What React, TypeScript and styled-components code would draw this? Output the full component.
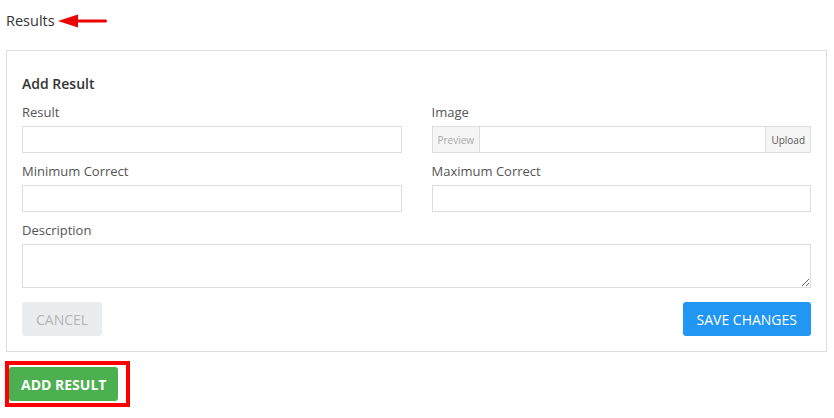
import React from "react";
import styled, { createGlobalStyle } from "styled-components";

const Global = createGlobalStyle`
  html, body { margin: 0; padding: 0; background: #fff; }
  body { font-family: "Open Sans", "Liberation Sans", sans-serif; color: #333; }
  * { box-sizing: border-box; }
`;

const Page = styled.div`
  padding: 0 7px 0 6px;
`;

const TitleRow = styled.div`
  display: flex;
  align-items: center;
  height: 39px;
  padding-top: 2px;
  gap: 3px;
`;

const PageTitle = styled.span`
  font-size: 14.5px;
  color: #333;
`;

const Panel = styled.div`
  margin-top: 11px;
  border: 1px solid #ddd;
  padding: 24px 15px 15px 15px;
`;

const Heading = styled.h4`
  margin: 0 0 11px 0;
  font-size: 14px;
  font-weight: 600;
  line-height: 17px;
  color: #333;
`;

const Row = styled.div`
  display: grid;
  grid-template-columns: 1fr 1fr;
  column-gap: 30px;
`;

const Group = styled.div<{ $gap?: number }>`
  margin-bottom: ${(p) => p.$gap ?? 9}px;
`;

const Label = styled.label`
  display: block;
  font-size: 13px;
  line-height: 18px;
  color: #555;
  margin-bottom: 5px;
`;

const Input = styled.input`
  display: block;
  width: 100%;
  height: 27px;
  border: 1px solid #ddd;
  padding: 0 8px;
  font: inherit;
  font-size: 13px;
  outline: none;
`;

const InputGroup = styled.div`
  display: flex;
  height: 27px;
`;

const Addon = styled.span<{ $muted?: boolean }>`
  display: flex;
  align-items: center;
  justify-content: center;
  padding: 0 5px;
  font-size: 10px;
  color: ${(p) => (p.$muted ? "#aaa" : "#555")};
  background: #f5f5f5;
  border: 1px solid #ddd;
`;

const GroupInput = styled.input`
  flex: 1;
  min-width: 0;
  border: 1px solid #ddd;
  border-left: none;
  border-right: none;
  outline: none;
  padding: 0 8px;
`;

const TextArea = styled.textarea`
  display: block;
  width: 100%;
  height: 44px;
  border: 1px solid #ddd;
  resize: vertical;
  outline: none;
  font: inherit;
  margin: 0;
`;

const Actions = styled.div`
  display: flex;
  justify-content: space-between;
`;

const Button = styled.button<{ $variant: "cancel" | "save" | "add" }>`
  height: 34px;
  border: none;
  border-radius: 3px;
  font-family: "Open Sans", "Liberation Sans", sans-serif;
  font-size: 14px;
  text-transform: uppercase;
  padding: 0 ${(p) => (p.$variant === "add" ? 12 : 14)}px;
  cursor: pointer;
  background: ${(p) =>
    p.$variant === "cancel" ? "#ebeced" : p.$variant === "save" ? "#2196f3" : "#4caf50"};
  color: ${(p) => (p.$variant === "cancel" ? "#b4b4b4" : "#fff")};
  font-weight: ${(p) => (p.$variant === "add" ? 700 : 400)};
`;

const Highlight = styled.div`
  display: inline-block;
  margin: 9px 0 0 -1px;
  border: 4px solid #ff0000;
  padding: 2px 8px 2px 0;
`;

const Arrow = () => (
  <svg width="50" height="14" viewBox="0 0 50 14">
    <polygon points="0,7 20,0.5 20,13.5" fill="#ee0000" />
    <rect x="18" y="5.5" width="31" height="3" rx="1.5" fill="#ee0000" />
  </svg>
);

export default function App() {
  return (
    <Page>
      <Global />
      <TitleRow>
        <PageTitle>Results</PageTitle>
        <Arrow />
      </TitleRow>
      <Panel>
        <Heading>Add Result</Heading>
        <Row>
          <Group>
            <Label>Result</Label>
            <Input />
          </Group>
          <Group>
            <Label>Image</Label>
            <InputGroup>
              <Addon $muted>Preview</Addon>
              <GroupInput />
              <Addon>Upload</Addon>
            </InputGroup>
          </Group>
          <Group>
            <Label>Minimum Correct</Label>
            <Input />
          </Group>
          <Group>
            <Label>Maximum Correct</Label>
            <Input />
          </Group>
        </Row>
        <Group $gap={14}>
          <Label>Description</Label>
          <TextArea />
        </Group>
        <Actions>
          <Button $variant="cancel">Cancel</Button>
          <Button $variant="save">Save Changes</Button>
        </Actions>
      </Panel>
      <Highlight>
        <Button $variant="add">Add Result</Button>
      </Highlight>
    </Page>
  );
}
